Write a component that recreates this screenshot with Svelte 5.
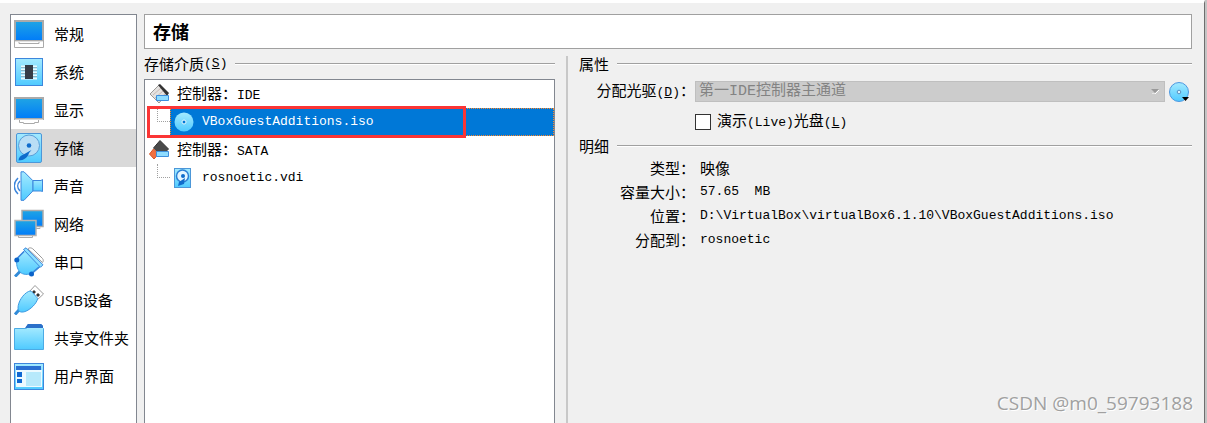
<script lang="ts">
	const pages = [
		{ id: 'general', label: '常规' },
		{ id: 'system', label: '系统' },
		{ id: 'display', label: '显示' },
		{ id: 'storage', label: '存储' },
		{ id: 'audio', label: '声音' },
		{ id: 'network', label: '网络' },
		{ id: 'serial', label: '串口' },
		{ id: 'usb', label: 'USB设备' },
		{ id: 'folders', label: '共享文件夹' },
		{ id: 'ui', label: '用户界面' }
	];

	const details = [
		{ name: '类型', value: '映像', cjk: true },
		{ name: '容量大小', value: '57.65  MB' },
		{ name: '位置', value: 'D:\\VirtualBox\\virtualBox6.1.10\\VBoxGuestAdditions.iso' },
		{ name: '分配到', value: 'rosnoetic' }
	];

	let current = $state('storage');
	let live = $state(false);
</script>

{#snippet disk()}
	<rect x="2.5" y=".5" width="25" height="29" rx="1.5" fill="url(#sky)" stroke="#4c97d8" />
	<circle cx="15" cy="12.500" r="10.500" fill="#b9def5" stroke="#5a9fd8" />
	<circle cx="15" cy="12.500" r="2.300" fill="#0f6ccc" />
	<path d="M17.500 17 15 20c-1 4-5 7.500-10.500 7.500 0-3 2-5 5-6z" fill="#0f6ccc" />
{/snippet}

{#snippet controller(sata: boolean)}
	<svg class="tree-icon" viewBox="0 0 20 20" width="20" height="20" aria-hidden="true">
		{#if sata}
			<path d="m11 .5 8.500 8.500-7 7-8-8z" fill="#4a4a4a" stroke="#333" />
			<path d="m.5 14 4-5 5 5-4.500 5z" fill="#f07040" stroke="#d65426" />
		{:else}
			<path d="m10 1-9 9 9 9 8-9z" fill="#e4e2e0" stroke="#9b9896" />
			<path d="m4 11 8-7M6 14l8-7M9 16l7-6" stroke="#c9b9b4" />
			<path d="m9 1 2-1 9 9-2 3z" fill="#333" />
		{/if}
		<path d="M7.500 11.500h12v5h-12z" fill="#8edcff" stroke="#3d8fdc" />
	</svg>
{/snippet}

<svg class="defs" width="0" height="0" aria-hidden="true">
	<defs>
		<linearGradient id="screen" x2="0" y2="1">
			<stop stop-color="#20a5e4" />
			<stop offset="1" stop-color="#007bf9" />
		</linearGradient>
		<linearGradient id="sky" x2="0" y2="1">
			<stop stop-color="#a4eaff" />
			<stop offset="1" stop-color="#4fcaff" />
		</linearGradient>
	</defs>
</svg>

<div class="window">
	<nav class="sidebar">
		{#each pages as page}
			<button
				class="page-btn"
				class:active={current === page.id}
				onclick={() => (current = page.id)}
			>
				<svg viewBox="0 0 30 30" width="30" height="30" aria-hidden="true">
					{#if page.id === 'general'}
						<path d="M.5 22.500h29v6H.5z" fill="#fff" stroke="#aaa" />
						<path d="M5 22v2.500h20V22" fill="#fff" stroke="#aaa" />
						<rect x="1" y="2" width="28" height="20" fill="url(#screen)" stroke="#aaa" stroke-width="2" />
						<path d="M1 22.500h28" stroke="#e2e2e2" />
					{:else if page.id === 'system'}
						<rect x="1.500" y="1.500" width="27" height="27" fill="url(#sky)" stroke="#3d86dc" />
						<path d="M7 9.500h16M7 12.500h16M7 15.500h16M7 18.500h16M7 21.500h16" stroke="#e9faff" stroke-width="2" />
						<path d="M7 10.500h16M7 13.500h16M7 16.500h16M7 19.500h16" stroke="#8fb6c8" />
						<rect x="11" y="8" width="8" height="14" fill="#363c48" />
					{:else if page.id === 'display'}
						<path d="M5.500 24v3.500h4v1h11v-1h4V24" fill="#fff" stroke="#aaa" />
						<rect x="1" y="3" width="28" height="21" fill="url(#screen)" stroke="#aaa" stroke-width="2" />
						<path d="M1 24.500h28" stroke="#d5d5d5" />
					{:else if page.id === 'storage'}
						{@render disk()}
					{:else if page.id === 'audio'}
						<path d="M4 7C-1 12-1 18 4 23M6 10c-3 3-3 7 0 10" fill="none" stroke="#3d86dc" stroke-width="1.500" />
						<path d="M7 .8h3l9 9v10l-9 9.500H7z" fill="url(#sky)" stroke="#3d86dc" />
						<path d="M19 9.500h8l1.500-1v12l-1.500-.5h-8z" fill="url(#sky)" stroke="#3d86dc" />
					{:else if page.id === 'network'}
						<path d="M8 1.500h21v16H8z" fill="url(#screen)" stroke="#aaa" stroke-width="1.500" />
						<path d="M22 19.500h4v-1" fill="none" stroke="#aaa" />
						<path d="M4.500 26v2.500h14V26" fill="#fff" stroke="#aaa" />
						<path d="M1 11.500h21v15H1z" fill="url(#screen)" stroke="#b4b4b4" stroke-width="1.500" />
					{:else if page.id === 'serial'}
						<path d="M14 2c1-2 4-1 5 0l9.500 9.500c1 1 1 3 0 4z" fill="#fff" stroke="#999" />
						<path d="M1 29.500 6 24.500" stroke="#318bd8" stroke-width="3" />
						<path d="m11 3-8 9c-1 5 0 10 3 13 3 3 8 3 13 1l8-7z" fill="url(#sky)" stroke="#3d9be2" />
						<path d="M9.500 2.500 12 .8l17 17-2.500 2.500z" fill="#8cdfff" stroke="#3d86dc" />
						<path d="M10 4.500 3.500 11M25 20l-7 6" stroke="#3d86dc" stroke-width="1.500" />
						<circle cx="2.800" cy="13" r="2.500" fill="#0b62c9" />
						<circle cx="17.500" cy="27" r="2.500" fill="#0b62c9" />
					{:else if page.id === 'usb'}
						<path d="m15 7 6-6.500 8.500 8.500-7 6.500z" fill="#fff" stroke="#999" />
						<path d="m20 5 2 2-2 2-2-2zM24 8l2 2-2 2-2-2z" fill="#333" />
						<path d="M1 29.500 5 25" stroke="#318bd8" stroke-width="3" />
						<path d="M14.500 6.500c2-1 3 0 4 1l3.500 4c1.500 1.500 2 2 1 4-2 5-9 11-14 11.500-3 .5-5-1-5-4C4 17 9 9 14.500 6.500z" fill="url(#sky)" stroke="#3d9be2" />
					{:else if page.id === 'folders'}
						<path d="m11 5 3-4h13l2 2v5H11z" fill="#2a70c9" />
						<path d="M.5 5.500h11l2-1h15l1 1v21H.5z" fill="url(#sky)" stroke="#4cabe5" />
						<path d="m12 4 2-3h13l2 2v2H12z" fill="#2a70c9" />
					{:else}
						<rect x=".5" y="2.500" width="29" height="26" fill="url(#sky)" stroke="#3d86dc" />
						<path d="M2 5h25v4H2z" fill="#2a70d2" />
						<path d="M2 9h26v17H2z" fill="#edfaff" />
						<path d="M12 11h15v14H12z" fill="#b7e9fb" />
						<path d="M3 11h5v5H3zM3 18h5v4H3z" fill="#0f68d2" />
					{/if}
				</svg>
				<span>{page.label}</span>
			</button>
		{/each}
	</nav>

	<main class="content">
		<h1 class="title">存储</h1>

		<div class="columns">
			<section class="media">
				<h2 class="group-head">存储介质<span class="mono">(<u>S</u>)</span></h2>
				<ul class="tree">
					<li class="row">
						{@render controller(false)}
						<span>控制器：<span class="mono">IDE</span></span>
					</li>
					<li class="row child marked">
						<span class="branch"></span>
						<span class="item selected">
							<svg viewBox="0 0 20 20" width="20" height="20" aria-hidden="true">
								<circle cx="10" cy="10" r="9.500" fill="url(#sky)" />
								<circle cx="10" cy="10" r="2" fill="#0078d7" stroke="#e9faff" />
							</svg>
							<span class="mono">VBoxGuestAdditions.iso</span>
						</span>
					</li>
					<li class="row">
						{@render controller(true)}
						<span>控制器：<span class="mono">SATA</span></span>
					</li>
					<li class="row child">
						<span class="branch"></span>
						<span class="item">
							<svg viewBox="0 0 20 20" width="20" height="20" aria-hidden="true">
								<rect x=".5" y=".5" width="16" height="19" fill="url(#sky)" stroke="#4c97d8" />
								<circle cx="8.500" cy="8" r="6" fill="#e4f6ff" stroke="#2b7fd5" stroke-width="1.500" />
								<circle cx="9" cy="8" r="2" fill="#0f6ccc" />
								<path d="m11 10-1 6-6 2 1-4z" fill="#0f6ccc" />
							</svg>
							<span class="mono">rosnoetic.vdi</span>
						</span>
					</li>
				</ul>
			</section>

			<div class="divider"></div>

			<section>
				<h2 class="group-head">属性</h2>
				<div class="attributes">
					<label class="name" for="drive">分配光驱<span class="mono">(<u>D</u>)</span>：</label>
					<div class="drive">
						<div class="combo">
							<select id="drive" disabled>
								<option>第一IDE控制器主通道</option>
							</select>
							<svg viewBox="0 0 8 5" width="8" height="5" aria-hidden="true">
								<path d="m1 5 3 0 4-4" stroke="#fff" fill="none" />
								<path d="M0 0h8L4 4z" fill="#999" />
							</svg>
						</div>
						<button class="choose" aria-label="选择虚拟光盘">
							<svg viewBox="0 0 20 20" width="20" height="20">
								<circle cx="10" cy="10" r="9.500" fill="url(#sky)" stroke="#4d98e0" />
								<circle cx="10" cy="10" r="1.800" fill="#d8f3ff" stroke="#5a8fc0" />
								<path d="M13 15h7l-3.500 4z" fill="#000" />
							</svg>
						</button>
					</div>
					<label class="live">
						<input type="checkbox" bind:checked={live} />
						<span>演示<span class="mono">(Live)</span>光盘<span class="mono">(<u>L</u>)</span></span>
					</label>
				</div>

				<h2 class="group-head">明细</h2>
				<dl class="details">
					{#each details as row}
						<dt>{row.name}：</dt>
						<dd class:mono={!row.cjk}>{row.value}</dd>
					{/each}
				</dl>
			</section>
		</div>
	</main>

	<span class="watermark">CSDN @m0_59793188</span>
</div>

<style>
	:global(body) {
		background: #c4c4c4;
	}

	.defs {
		position: absolute;
	}

	.window {
		position: relative;
		box-sizing: border-box;
		min-height: 100vh;
		margin-right: 2px;
		padding: 11px 12px 0 10px;
		display: flex;
		gap: 7px;
		border-top: 3px solid #fff;
		border-right: 1px solid #6e6e6e;
		background: #f0f0f0;
		color: #000;
		font-family: 'Noto Sans CJK SC', sans-serif;
		font-size: 15px;
		line-height: 16px;
	}

	.mono {
		font-family: 'Liberation Mono', monospace;
		font-size: 13px;
		white-space: pre;
	}

	.sidebar {
		flex: none;
		box-sizing: border-box;
		width: 127px;
		border: 1px solid #828790;
		border-bottom: 0;
		background: #fff;
	}

	.page-btn {
		display: flex;
		align-items: center;
		gap: 10px;
		width: 100%;
		height: 38px;
		padding: 0 0 0 3px;
		border: 0;
		background: none;
		color: inherit;
		font: 15px 'Open Sans', 'Noto Sans CJK SC', sans-serif;
		white-space: nowrap;
	}

	.page-btn.active {
		background: #d9d9d9;
	}

	.page-btn svg {
		flex: none;
	}

	.page-btn span {
		padding-bottom: 2px;
	}

	.content {
		flex: 1;
		min-width: 0;
		display: flex;
		flex-direction: column;
	}

	.title {
		margin: 0;
		padding: 0 8px;
		border: 1px solid #a0a0a0;
		background: #fff;
		font-size: 18px;
		line-height: 33px;
		font-weight: 700;
	}

	.columns {
		flex: 1;
		display: grid;
		grid-template-columns: 411fr 2px 613fr;
		gap: 11px;
		padding-top: 7px;
	}

	.media {
		display: flex;
		flex-direction: column;
	}

	.group-head {
		display: flex;
		align-items: center;
		margin: 0;
		font-size: 15px;
		line-height: 16px;
		font-weight: 400;
	}

	.group-head::after {
		content: '';
		flex: 1;
		margin-left: 8px;
		border-top: 1px solid #a0a0a0;
		border-bottom: 1px solid #fff;
	}

	.tree {
		flex: 1;
		margin: 7px 0 0;
		padding: 0;
		list-style: none;
		border: 1px solid #828790;
		border-bottom: 0;
		background: #fff;
	}

	.row {
		display: flex;
		align-items: center;
		gap: 8px;
		height: 28px;
		padding-left: 4px;
	}

	.child {
		position: relative;
		gap: 0;
		padding-left: 12px;
	}

	.branch {
		align-self: flex-start;
		width: 12px;
		height: 13px;
		border-left: 1px dotted #a0a0a0;
		border-bottom: 1px dotted #a0a0a0;
	}

	.item {
		flex: 1;
		display: flex;
		align-items: center;
		gap: 8px;
		box-sizing: border-box;
		height: 28px;
		padding-left: 3px;
		border: 1px solid transparent;
	}

	.item.selected {
		border: 1px dotted #ff8728;
		background: #0078d7;
		color: #fff;
	}

	.marked::after {
		content: '';
		position: absolute;
		inset: -2px auto -2px 2px;
		box-sizing: border-box;
		width: 78%;
		border: 3px solid #fb3535;
	}

	.divider {
		background: #c8c8c8;
	}

	.attributes {
		display: grid;
		grid-template-columns: 116px 1fr;
		align-items: center;
		row-gap: 10px;
		padding: 9px 0 7px;
	}

	.name {
		text-align: right;
	}

	.drive {
		display: flex;
		align-items: center;
		gap: 4px;
		height: 21px;
		padding-right: 3px;
	}

	.combo {
		flex: 1;
		display: flex;
		align-items: center;
		box-sizing: border-box;
		height: 21px;
		padding-right: 5px;
		border: 1px solid #bfbfbf;
		background: #ccc;
	}

	.combo select {
		flex: 1;
		appearance: none;
		height: 19px;
		padding: 0 3px;
		border: 0;
		background: none;
		color: #838383;
		opacity: 1;
		font: 15px/19px 'Liberation Mono', 'Noto Sans CJK SC', monospace;
	}

	.choose {
		display: flex;
		padding: 0;
		border: 0;
		background: none;
	}

	.live {
		grid-column: 2;
		display: flex;
		align-items: center;
		gap: 6px;
	}

	.live input {
		appearance: none;
		box-sizing: border-box;
		width: 16px;
		height: 16px;
		margin: 0;
		border: 1px solid #333;
		background: #fff;
	}

	.live input:checked {
		background: #0078d7;
	}

	.details {
		display: grid;
		grid-template-columns: 116px 1fr;
		column-gap: 5px;
		margin: 2px 0 0;
		line-height: 24px;
	}

	.details dt {
		text-align: right;
	}

	.details dd {
		margin: 0;
	}

	.watermark {
		position: absolute;
		right: 11px;
		bottom: 8px;
		color: #a0a0a0;
		font: 19px/24px 'Open Sans', 'Noto Sans', sans-serif;
		text-shadow: 1px 1px 0 #fff;
	}
</style>
